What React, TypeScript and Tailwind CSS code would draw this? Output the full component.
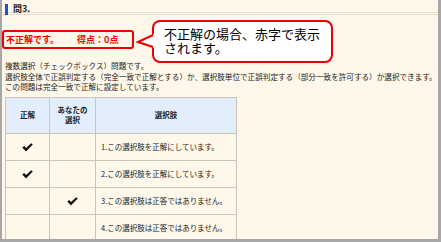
import React from 'react'

const jp = { fontFamily: '"Noto Sans CJK JP", "Noto Sans", sans-serif' }

const rows = [
  { correct: true, mine: false, text: '1.この選択肢を正解にしています。' },
  { correct: true, mine: false, text: '2.この選択肢を正解にしています。' },
  { correct: false, mine: true, text: '3.この選択肢は正答ではありません。' },
  { correct: false, mine: false, text: '4.この選択肢は正答ではありません。' },
]

function Check() {
  return (
    <svg className="inline-block" width="11" height="9" viewBox="0 0 11 9">
      <path d="M0.3 4.6 L2.2 3 L4 5 L9.2 0.2 L10.8 1.6 L4 8.6 Z" fill="#111" />
    </svg>
  )
}

export default function App() {
  return (
    <div
      className="relative w-[441px] h-[242px] overflow-hidden bg-[#fff8ea] border-l-2 border-r-[3px] border-b-[3px] border-[#a7a7a7]"
      style={jp}
    >
      {/* header */}
      <div className="h-[13px] border-b border-[#e4dfcb] flex items-start pt-[4px] pl-[3px]">
        <div className="w-[3px] h-[11px] bg-[#1d4fd0]" />
        <span className="ml-[5px] text-[9px] leading-[9px] font-bold text-[#222]">問3.</span>
      </div>
      <div className="h-[2px] border-b border-[#e4dfcb]" />

      {/* result */}
      <div className="mt-[15px] w-[132px] h-[19px] border-2 border-[#ee0000] rounded-[3px] flex items-center pl-[2px] text-[9px] font-bold text-[#ee0000] leading-none">
        <span>不正解です。</span>
        <span className="ml-[18px]">得点：0点</span>
      </div>

      {/* description */}
      <div className="mt-[12px] px-[3px] text-[7.6px] leading-[10.5px] text-[#222] whitespace-nowrap">
        <p>複数選択（チェックボックス）問題です。</p>
        <p>選択肢全体で正誤判定する（完全一致で正解とする）か、選択肢単位で正誤判定する（部分一致を許可する）か選択できます。</p>
        <p>この問題は完全一致で正解に設定しています。</p>
      </div>

      {/* table */}
      <table className="mt-[4px] ml-[3px] border-collapse text-[7.5px] text-[#222]">
        <thead>
          <tr className="bg-[#e3eefc] h-[36px]">
            <th className="w-[44px] border border-[#c9c7bd] font-bold">正解</th>
            <th className="w-[46px] border border-[#c9c7bd] font-bold leading-[10px]">
              あなたの
              <br />
              選択
            </th>
            <th className="w-[141px] border border-[#c9c7bd] font-bold">選択肢</th>
          </tr>
        </thead>
        <tbody>
          {rows.map((r, i) => (
            <tr key={i} className="h-[27px]">
              <td className="border border-[#c9c7bd] text-center">{r.correct && <Check />}</td>
              <td className="border border-[#c9c7bd] text-center">{r.mine && <Check />}</td>
              <td className="border border-[#c9c7bd] pl-[5px]">{r.text}</td>
            </tr>
          ))}
        </tbody>
      </table>

      {/* callout */}
      <div className="absolute left-[150px] top-[20px] w-[181px] h-[43px] bg-white border-2 border-[#ee0000] rounded-[8px] pl-[10px] pt-[5px] text-[13px] leading-[13.5px] text-black">
        <p>
          不正解の場合、赤字で表示
          <br />
          されます。
        </p>
      </div>
      <svg className="absolute left-[134px] top-[32px]" width="20" height="20" viewBox="0 0 20 20">
        <polygon points="18,2 2,10 18,16" fill="#fff" />
        <polyline points="17,3 2,10 17,15" fill="none" stroke="#ee0000" strokeWidth="2" strokeLinejoin="miter" />
      </svg>
    </div>
  )
}
